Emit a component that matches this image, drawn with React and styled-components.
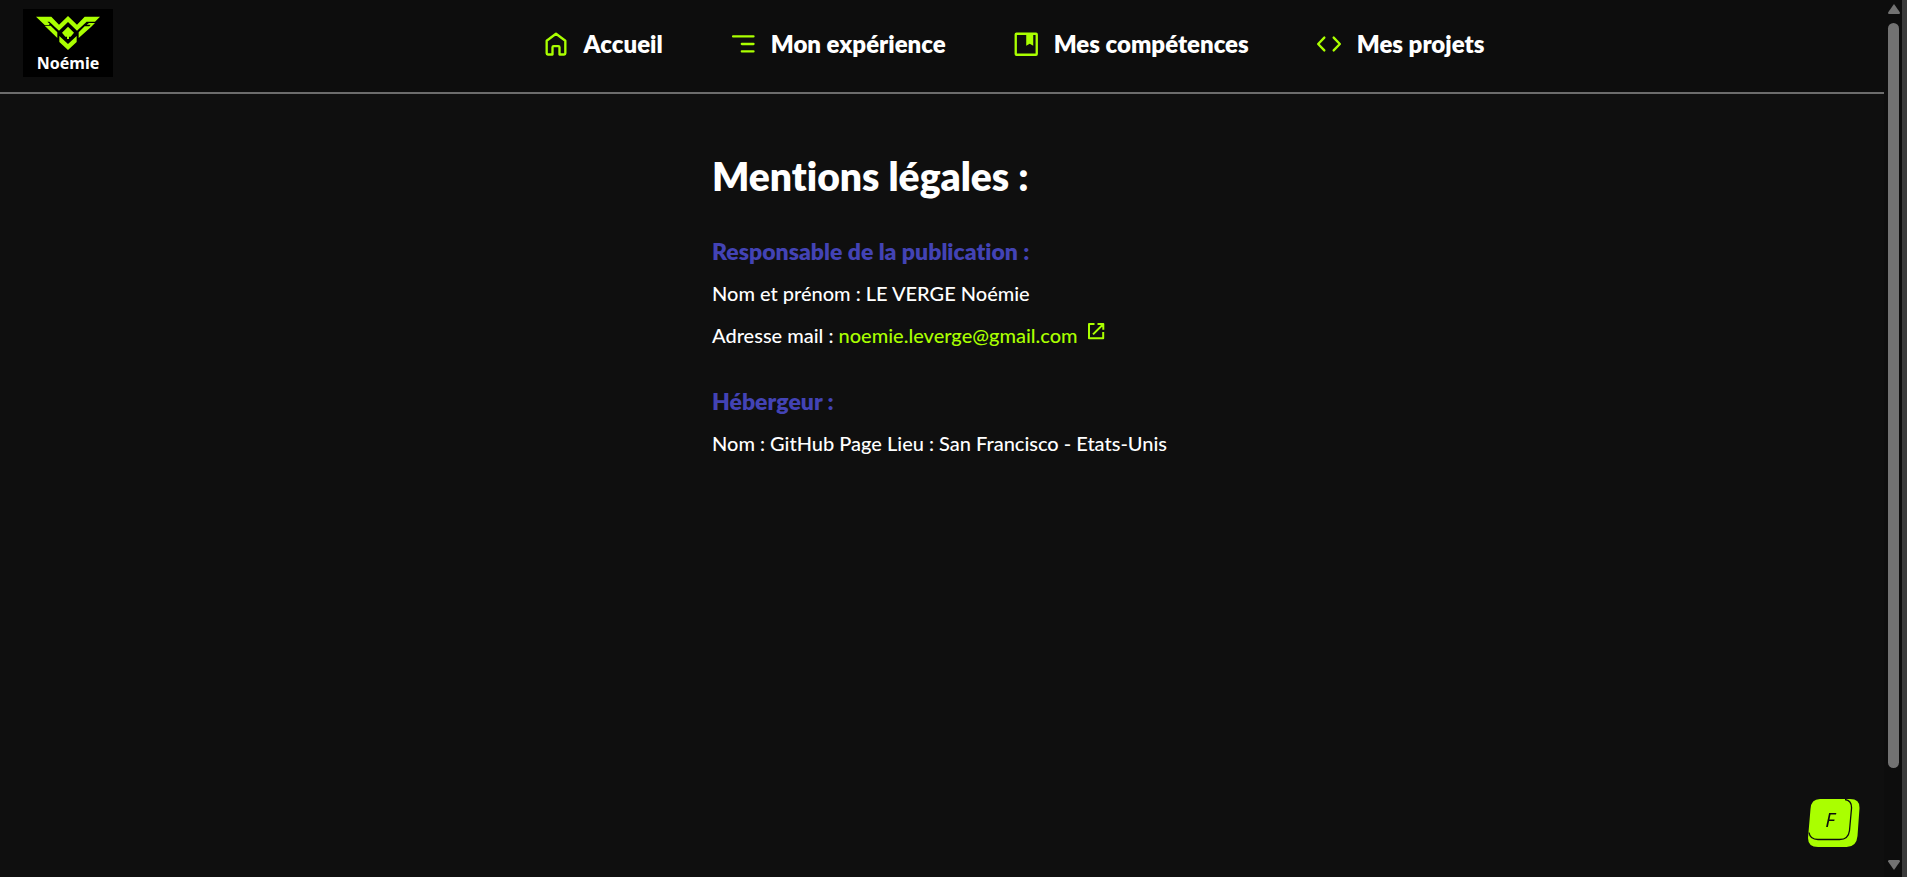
import React from "react";
import styled, { createGlobalStyle } from "styled-components";

const lime = "#aaff00";

const GlobalStyle = createGlobalStyle`
  * { box-sizing: border-box; }
  body {
    margin: 0;
    background: #0f0f0f;
    color: #fff;
    font-family: Lato, "Open Sans", sans-serif;
    font-variant-ligatures: none;
    overflow: hidden;
  }
`;

const Shell = styled.div`
  display: flex;
  height: 100vh;
`;

const Page = styled.div`
  flex: 1;
  min-width: 0;
`;

const Header = styled.header`
  display: flex;
  align-items: flex-start;
  padding: 9px 23px 15px;
  background: #0d0d0d;
  border-bottom: 2px solid #6c6c6c;
`;

const Logo = styled.a`
  display: flex;
  flex-direction: column;
  align-items: center;
  width: 90px;
  height: 68px;
  padding-top: 7px;
  background: #000;
  color: #fff;
  font: 700 16px/26px "Noto Sans", sans-serif;
  text-decoration: none;
`;

const Nav = styled.nav`
  flex: 1;
  display: flex;
  justify-content: center;
  gap: 66px;
  padding: 19px 0 0 52px;
`;

const NavLink = styled.a`
  display: flex;
  align-items: center;
  gap: 14px;
  color: #fff;
  font-size: 24px;
  line-height: 32px;
  font-weight: 800;
  text-decoration: none;
  white-space: nowrap;
`;

const Icon = styled.svg`
  width: ${(p) => p.$size}px;
  height: ${(p) => p.$size}px;
  flex: none;
  fill: none;
  stroke: ${lime};
  stroke-width: 2;
`;

const Main = styled.main`
  width: 460px;
  max-width: 100%;
  margin: 0 auto;
  padding-top: 54px;
`;

const Title = styled.h1`
  margin: 0 0 26px;
  font-size: 39px;
  line-height: 56px;
  font-weight: 800;
`;

const Section = styled.section`
  margin-bottom: 24px;
`;

const Subtitle = styled.h2`
  margin: 0;
  color: #4343b5;
  font-size: 23px;
  line-height: 42px;
  font-weight: 800;
`;

const Line = styled.p`
  margin: 0;
  font-size: 20px;
  line-height: 42px;
  font-weight: 500;
  white-space: nowrap;
`;

const MailLink = styled.a`
  color: ${lime};
  text-decoration: none;
  svg {
    margin-left: 8px;
    vertical-align: 2px;
  }
`;

const KeyButton = styled.button`
  position: fixed;
  right: 47px;
  bottom: 29px;
  width: 52px;
  height: 49px;
  padding: 0 8px 8px 0;
  border: 0;
  background: none;
  color: #0d0d0d;
  font: italic 400 20px/24px "Noto Sans", sans-serif;
  cursor: pointer;
  svg { position: absolute; inset: 0; z-index: -1; }
`;

const ScrollRail = styled.div`
  display: flex;
  flex-direction: column;
  align-items: center;
  width: 18px;
  padding: 4px 0 7px 1px;
  background: #0d0d0d;
`;

const ScrollTrack = styled.div`
  flex: 1;
  width: 11px;
  margin: 9px 0;
`;

const ScrollThumb = styled.div`
  height: 90%;
  border-radius: 6px;
  background: #727272;
`;

const WindowEdge = styled.div`
  width: 5px;
  background: #3b3b3b;
`;

const HomeIcon = () => (
  <Icon $size={28} viewBox="0 0 24 24" strokeLinejoin="round" aria-hidden="true">
    <path d="M4 9.2 12 3.2l8 6V20a1 1 0 0 1-1 1h-4v-6.2a1 1 0 0 0-1-1h-4a1 1 0 0 0-1 1V21H5a1 1 0 0 1-1-1z" />
  </Icon>
);

const MenuIcon = () => (
  <Icon $size={28} viewBox="0 0 24 24" strokeLinecap="round" aria-hidden="true">
    <path d="M3.5 5.4h17.5M11 12h10M11 18.3h10" />
  </Icon>
);

const BookIcon = () => (
  <Icon $size={28} viewBox="0 0 24 24" strokeLinejoin="round" aria-hidden="true">
    <rect x="3.2" y="3.2" width="18" height="18" rx="0.6" />
    <path d="M12.2 3.2h6v10.4l-3-1.8-3 1.8z" fill={lime} stroke="none" />
  </Icon>
);

const CodeIcon = () => (
  <Icon $size={28} viewBox="0 0 24 24" strokeLinecap="round" strokeLinejoin="round" aria-hidden="true">
    <path d="M8 6.5 2.7 12 8 17.5M16 6.5l5.3 5.5-5.3 5.5" />
  </Icon>
);

const ExternalIcon = () => (
  <Icon $size={20} viewBox="0 0 20 20" strokeLinejoin="round" aria-hidden="true">
    <path d="M8.5 3H3v14.2h14.2V11M11.5 3h5.8v5.800M17.2 3.2 7 13.4" />
  </Icon>
);

const LogoMark = () => (
  <svg width="64" height="34" viewBox="0 0 192 102" fill={lime} aria-hidden="true">
    <path d="M0 2h46l23 24L96 0l27 26 23-24h46l-15 15h-25l-29 27-27-26-27 26-29-27H34l7 6-2 4H26z" />
    <path d="M26 29h18l20 20v17z" />
    <path d="M128 66V49l18-18h14l4-5h-12l7-5h18l-12 12z" />
    <path d="M96 32l18 18-10 12h-5v7h-6v-7h-5L78 50z" />
    <path d="M70 60l26 24 26-24v18l-26 24-26-24z" />
  </svg>
);

const navItems = [
  { label: "Accueil", icon: HomeIcon },
  { label: "Mon expérience", icon: MenuIcon },
  { label: "Mes compétences", icon: BookIcon },
  { label: "Mes projets", icon: CodeIcon },
];

export default function App() {
  return (
    <>
      <GlobalStyle />
      <Shell>
        <Page>
          <Header>
            <Logo href="#">
              <LogoMark />
              Noémie
            </Logo>
            <Nav>
              {navItems.map(({ label, icon: Glyph }) => (
                <NavLink href="#" key={label}>
                  <Glyph />
                  {label}
                </NavLink>
              ))}
            </Nav>
          </Header>
          <Main>
            <Title>Mentions légales :</Title>
            <Section>
              <Subtitle>Responsable de la publication :</Subtitle>
              <Line>Nom et prénom : LE VERGE Noémie</Line>
              <Line>
                Adresse mail :{" "}
                <MailLink href="mailto:noemie.leverge@gmail.com">
                  noemie.leverge@gmail.com
                  <ExternalIcon />
                </MailLink>
              </Line>
            </Section>
            <Section>
              <Subtitle>Hébergeur :</Subtitle>
              <Line>Nom : GitHub Page Lieu : San Francisco - Etats-Unis</Line>
            </Section>
          </Main>
          <KeyButton type="button">
            <svg width="52" height="49" viewBox="0 0 52 49" aria-hidden="true">
              <path d="M12 0h30q10 0 9.5 9l-2 28q-1 11-11 11H10Q0 48 0 39L2.5 10Q3 0 12 0z" fill={lime} />
              <path d="M37 .5q7 1 6.5 9l-2 22q-1 9-10 9H10q-8 0-9-7" fill="none" stroke="#0d0d0d" strokeWidth="1.3" />
            </svg>
            F
          </KeyButton>
        </Page>
        <ScrollRail aria-hidden="true">
          <svg width="12" height="10" viewBox="0 0 12 10" fill="#727272"><path d="M6 0l6 8.5q0 1.5-1 1.5H1Q0 10 0 8.5z" /></svg>
          <ScrollTrack><ScrollThumb /></ScrollTrack>
          <svg width="12" height="10" viewBox="0 0 12 10" fill="#727272"><path d="M6 10 0 1.5Q0 0 1 0h10q1 0 1 1.5z" /></svg>
        </ScrollRail>
        <WindowEdge />
      </Shell>
    </>
  );
}
